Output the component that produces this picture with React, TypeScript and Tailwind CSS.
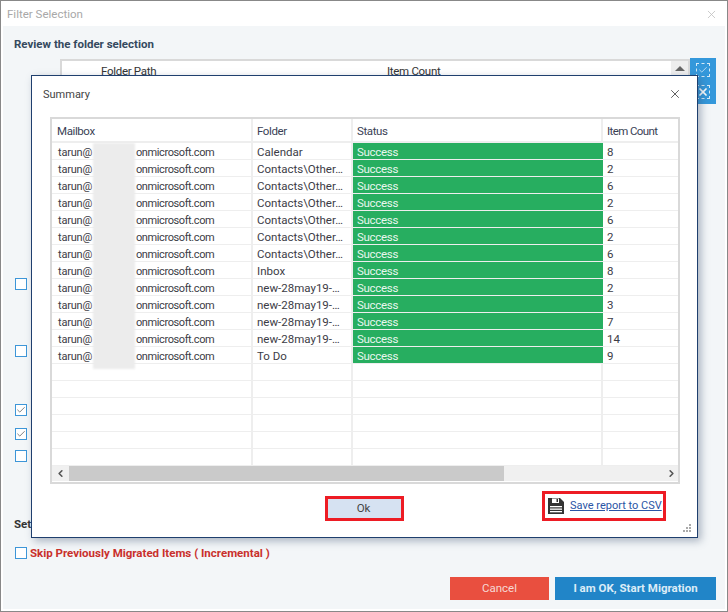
import { X, Check, ChevronLeft, ChevronRight } from "lucide-react";

const FONT = "font-['Roboto','Noto_Sans',sans-serif]";

const rows = [
  ["Calendar", "8"],
  ["Contacts\\Other…", "2"],
  ["Contacts\\Other…", "6"],
  ["Contacts\\Other…", "2"],
  ["Contacts\\Other…", "6"],
  ["Contacts\\Other…", "2"],
  ["Contacts\\Other…", "6"],
  ["Inbox", "8"],
  ["new-28may19-…", "2"],
  ["new-28may19-…", "3"],
  ["new-28may19-…", "7"],
  ["new-28may19-…", "14"],
  ["To Do", "9"],
];

const COLS = "grid grid-cols-[201px_100px_250px_74px]";

function Box({ checked, top }: { checked?: boolean; top?: string }) {
  return (
    <div className={`ml-[1px] flex h-[12px] w-[12px] items-center justify-center border border-[#3d96d8] bg-white ${top ?? ""}`}>
      {checked && <Check size={10} strokeWidth={2} className="text-[#666]" />}
    </div>
  );
}

function Summary() {
  return (
    <div className="absolute left-[30px] top-[74px] flex h-[463px] w-[667px] flex-col border border-[#1f3f6e] bg-white shadow-[3px_3px_8px_rgba(60,80,110,0.4)]">
      <div className="flex h-[41px] shrink-0 items-start justify-between pl-[11px] pr-[15px] pt-[11px]">
        <span className="mt-[1px] text-[11px] leading-[14px] text-[#444]">Summary</span>
        <X size={14} strokeWidth={1.6} className="text-[#555]" />
      </div>
      <div className="relative ml-[18px] h-[367px] w-[630px] border-2 border-[#d9d9d9] bg-white">
        <div className={`${COLS} h-[24px] border-b-2 border-[#eeeeee] text-[11.5px] leading-[16px] tracking-[-0.4px] text-[#3a3f55]`}>
          <div className="border-r-2 border-[#eeeeee] pl-[5px] pt-[4px]">Mailbox</div>
          <div className="border-r-2 border-[#eeeeee] pl-[4px] pt-[4px]">Folder</div>
          <div className="border-r-2 border-[#eeeeee] pl-[4px] pt-[4px]">Status</div>
          <div className="pl-[4px] pt-[4px] tracking-[-0.6px]">Item Count</div>
        </div>
        {rows.map(([folder, count], i) => (
          <div key={i} className={`${COLS} h-[17px] border-b border-[#eeeeee] text-[11.5px] leading-[14px] text-[#3c3c46]`}>
            <div className="flex border-r-2 border-[#eeeeee] pl-[6px] pt-[3px] text-[11px] leading-[13px] tracking-[-0.4px]">
              <span className="w-[78px] tracking-[-0.2px]">tarun@</span>
              <span>onmicrosoft.com</span>
            </div>
            <div className="border-r-2 border-[#eeeeee] pl-[4px] pt-[2px]">{folder}</div>
            <div className="bg-[#27ae60] pl-[4px] pt-[2px] tracking-[-0.3px] text-[#e8f6ee]">Success</div>
            <div className="pl-[4px] pt-[2px]">{count}</div>
          </div>
        ))}
        {[0, 1, 2, 3, 4, 5].map((i) => (
          <div key={i} className={`${COLS} h-[17px] border-b border-[#eeeeee] last:border-b-0`}>
            <div className="border-r-2 border-[#eeeeee]" />
            <div className="border-r-2 border-[#eeeeee]" />
            <div className="border-r-2 border-[#eeeeee]" />
            <div />
          </div>
        ))}
        {/* blurred domain */}
        <div className="absolute left-[41px] top-[24px] h-[226px] w-[42px] bg-[#ececec] blur-[1px]" />
        <div className="flex h-[15px] w-full bg-[#f0f0f0]">
          <div className="flex w-[17px] items-center justify-center">
            <ChevronLeft size={11} strokeWidth={3.5} className="text-[#555]" />
          </div>
          <div className="h-full w-[435px] bg-[#cacaca]" />
          <div className="flex flex-1 items-center justify-end pr-[1px]">
            <ChevronRight size={11} strokeWidth={3.5} className="text-[#555]" />
          </div>
        </div>
      </div>
      <div className="flex flex-1 items-start pl-[293px] pt-[11px]">
        <button className="mt-[1px] h-[25px] w-[79px] border-[3px] border-[#ed1c24] bg-[#d6e2f2] pr-[2px] text-[11.5px] text-[#444]">
          Ok
        </button>
        <div className="ml-[138px] -mt-[4px] flex h-[30px] w-[124px] items-center border-[3px] border-[#ed1c24] pl-[3px]">
          <svg width="16" height="16" viewBox="0 0 16 16" className="shrink-0">
            <path d="M0 0H12L16 4V16H0Z" fill="#333" />
            <rect x="4" y="0.5" width="7" height="4.5" fill="#fff" />
            <rect x="8.5" y="1" width="1.5" height="3" fill="#333" />
            <rect x="2" y="8" width="12" height="1.3" fill="#fff" />
            <rect x="2" y="10.5" width="12" height="1.3" fill="#fff" />
            <rect x="2" y="13" width="12" height="1.3" fill="#fff" />
          </svg>
          <a className="ml-[6px] -mt-[2px] whitespace-nowrap text-[11px] leading-[15px] text-[#2a55a5] underline">Save report to CSV</a>
        </div>
      </div>
      <svg width="8" height="8" viewBox="0 0 8 8" className="absolute bottom-[5px] right-[6px] text-[#aaa]">
        <path d="M6 0h2v2H6zM3 3h2v2H3zM6 3h2v2H6zM0 6h2v2H0zM3 6h2v2H3zM6 6h2v2H6z" fill="currentColor" />
      </svg>
    </div>
  );
}

export default function App() {
  return (
    <div className={`relative flex h-[612px] w-[728px] flex-col overflow-hidden border border-[#888] bg-white ${FONT}`}>
      <div className="flex h-[25px] shrink-0 items-center justify-between pl-[6px] pr-[9px] pt-[1px]">
        <span className="mt-[1px] text-[11.5px] text-[#a8a8a8]">Filter Selection</span>
        <X size={13} strokeWidth={1.5} className="text-[#c0c0c0]" />
      </div>
      <div className="relative mx-[2px] mb-[2px] flex flex-1 flex-col bg-[#f3f6f8] pl-[11px]">
        <div className="mt-[10px] text-[11.5px] font-bold leading-[16px] text-[#34495e]">Review the folder selection</div>
        <div className="ml-[46px] mt-[7px] flex">
          <div className="flex h-[30px] w-[630px] border-2 border-[#d9d9d9] bg-white text-[11.5px] tracking-[-0.3px] text-[#333]">
            <span className="ml-[39px] w-[286px] pt-[2px]">Folder Path</span>
            <span className="pt-[2px]">Item Count</span>
            <div className="ml-auto flex h-[15px] w-[17px] items-center justify-center bg-[#eee]">
              <div className="h-0 w-0 border-x-[5px] border-b-[5px] border-x-transparent border-b-[#666]" />
            </div>
          </div>
          <div className="-mt-[1px] flex h-[46px] w-[26px] flex-col items-center gap-[8px] bg-[#3498db] pt-[5px]">
            <div className="flex h-[14px] w-[14px] items-center justify-center border border-dashed border-white/80">
              <Check size={10} strokeWidth={1.5} className="text-white" />
            </div>
            <div className="flex h-[14px] w-[14px] items-center justify-center border border-dashed border-white/80">
              <X size={12} strokeWidth={3.5} className="text-white" />
            </div>
          </div>
        </div>
        <div className="flex flex-col">
          <Box top="mt-[174px]" />
          <Box top="mt-[55px]" />
          <Box checked top="mt-[47px]" />
          <Box checked top="mt-[12px]" />
          <Box top="mt-[10px]" />
        </div>
        <div className="mt-[54px] text-[11.5px] font-bold leading-[16px] text-[#333]">Set</div>
        <div className="mt-[12px] flex items-center gap-[3px]">
          <Box />
          <span className="text-[11.5px] font-bold leading-[18px] text-[#c9302c]">Skip Previously Migrated Items ( Incremental )</span>
        </div>
        <div className="mt-[15px] flex justify-end gap-[6px] pr-[9px]">
          <button className="h-[23px] w-[99px] bg-[#e94f3f] text-[11.5px] text-[#f6d9d5]">Cancel</button>
          <button className="h-[23px] w-[161px] bg-[#2185c8] text-[11.5px] font-bold text-[#dcecf7]">I am OK, Start Migration</button>
        </div>
      </div>
      <Summary />
    </div>
  );
}
